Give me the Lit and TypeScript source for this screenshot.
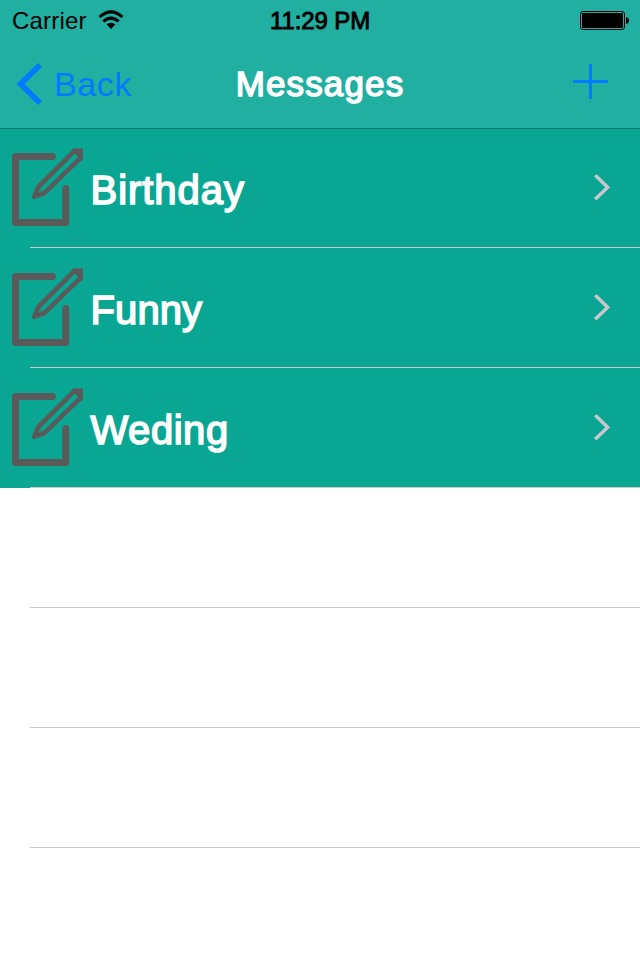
import { LitElement, html, css } from "lit";
import { customElement, property } from "lit/decorators.js";

@customElement("message-row")
class MessageRow extends LitElement {
  @property() label = "";
  @property({ type: Number }) spacing = 0;

  static styles = css`
    :host {
      display: flex;
      align-items: flex-start;
      box-sizing: border-box;
      height: 120px;
      background: linear-gradient(#c8c7cc, #c8c7cc) 30px 119px / 610px 1px no-repeat, #09a793;
    }
    .note { flex: none; width: 90.5px; height: 119px; }
    .label {
      flex: 1;
      font-size: 40px;
      line-height: 46px;
      padding-top: 39px;
      color: #fff;
      -webkit-text-stroke: 1.6px #fff;
      white-space: nowrap;
    }
    .chevron { flex: none; width: 50px; height: 119px; }
  `;

  render() {
    return html`
      <svg class="note" viewBox="0 0 90.5 119" fill="none" stroke="#5a5a5a" stroke-linejoin="round" stroke-linecap="round">
        <path d="M52.500 28.500H15.500V94.500H65.700V60.500" stroke-width="7" />
        <path d="M34.200 68.800L38.300 59L74.500 22.800L80.500 23.200L80 30.300L44.300 65.200Z" stroke-width="4.600" />
        <path d="M73 20.500H83V31.500L79.500 34.500L76.500 31.500L77.700 28.500L74 24.500Z" fill="#5a5a5a" stroke="none" />
        <path d="M33 69.500L38 58L45 65Z" fill="#5a5a5a" fill-opacity="0.350" stroke="none" />
      </svg>
      <span class="label" style="letter-spacing:${this.spacing}px">${this.label}</span>
      <svg class="chevron" viewBox="0 0 50 119" fill="none" stroke="#c7c7cc" stroke-width="3.400">
        <path d="M5.200 47.300L17.700 59.300L5.200 71.300" />
      </svg>
    `;
  }
}

@customElement("app-root")
class AppRoot extends LitElement {
  static styles = css`
    :host {
      display: block;
      height: 960px;
      overflow: hidden;
      background: #fff;
      font-family: "Liberation Sans", Arial, sans-serif;
    }
    .top {
      height: 128px;
      background: #20afa0;
      box-shadow: 0 1px #0f7c70;
      position: relative;
    }
    .status, .nav { display: grid; grid-template-columns: 1fr auto 1fr; }
    .status { height: 40px; font-size: 24px; line-height: 27px; color: #000; }
    .carrier { display: flex; padding: 7px 0 0 12px; letter-spacing: 0.200px; }
    .wifi { width: 26px; height: 20px; margin: 3px 0 0 11px; }
    .time { padding-top: 7px; -webkit-text-stroke: 0.900px #000; letter-spacing: -0.100px; }
    .battery { justify-self: end; width: 50px; height: 20px; margin: 11px 11px 0 0; }
    .nav { height: 88px; font-size: 34px; line-height: 40px; }
    .back { display: flex; color: #007aff; padding: 24px 0 0 16px; letter-spacing: 0.600px; }
    .arrow { width: 27px; height: 42px; margin: -1px 11px 0 0; }
    .title { color: #fff; font-size: 35px; padding-top: 24px; -webkit-text-stroke: 1.500px #fff; letter-spacing: 1.150px; }
    .plus { justify-self: end; width: 36px; height: 36px; margin: 24px 32px 0 0; }
    .empty { height: 119px; margin-left: 30px; border-bottom: 1px solid #c8c7cc; }
  `;

  render() {
    return html`
      <header class="top">
        <div class="status">
          <div class="carrier">
            <span>Carrier</span>
            <svg class="wifi" viewBox="0 0 26 20" fill="none" stroke="#000" stroke-width="3">
              <path d="M1.500 7Q13 -3.300 24.500 7M5.300 11.500Q13 4.700 20.700 11.500" />
              <path d="M8.500 14.300Q13 11 17.500 14.300L13 19Z" fill="#000" stroke="none" />
            </svg>
          </div>
          <div class="time">11:29 PM</div>
          <svg class="battery" viewBox="0 0 50 20">
            <rect x="1.500" y="0.500" width="44" height="18" rx="2.500" fill="none" stroke="#000" />
            <rect x="3" y="2" width="41" height="15" rx="1" />
            <path d="M47 6Q50 7 50 9.500T47 13Z" />
          </svg>
        </div>
        <div class="nav">
          <div class="back">
            <svg class="arrow" viewBox="0 0 27 42" fill="none" stroke="#007aff" stroke-width="5.600">
              <path d="M24 2L4.500 21L24 40" />
            </svg>
            <span>Back</span>
          </div>
          <div class="title">Messages</div>
          <svg class="plus" viewBox="0 0 36 36" fill="#007aff">
            <path d="M1 16H36V19H1ZM17 0H20V35H17Z" />
          </svg>
        </div>
      </header>
      <main>
        <message-row label="Birthday" spacing="0.95"></message-row>
        <message-row label="Funny" spacing="0.1"></message-row>
        <message-row label="Weding" spacing="0.55"></message-row>
        <div class="empty"></div>
        <div class="empty"></div>
        <div class="empty"></div>
      </main>
    `;
  }
}
